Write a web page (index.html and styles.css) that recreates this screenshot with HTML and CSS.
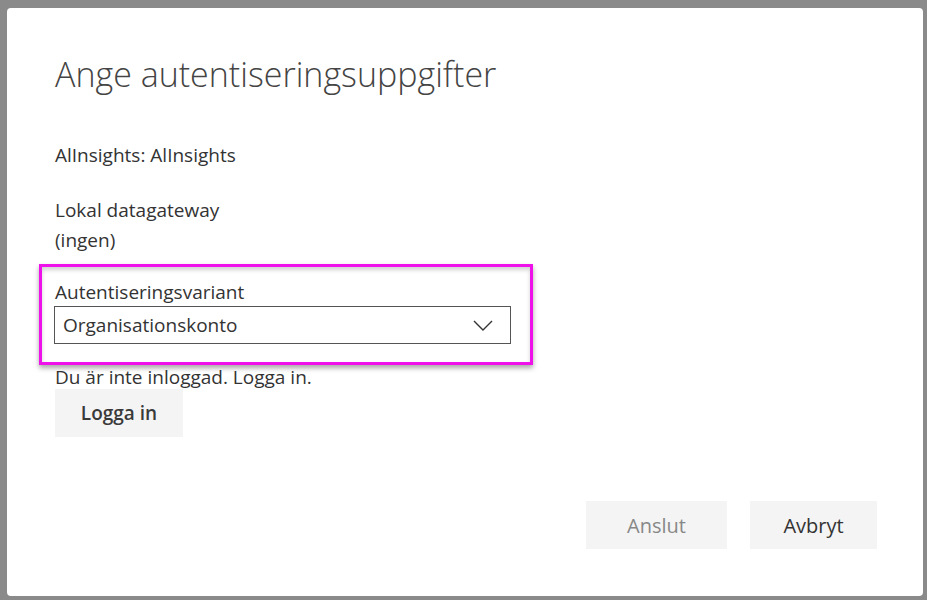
FILE: index.html
```html
<!DOCTYPE html>
<html lang="sv">
<head>
<meta charset="utf-8">
<title>Ange autentiseringsuppgifter</title>
<link rel="stylesheet" href="styles.css">
</head>
<body>
<div class="page">
  <div class="dialog">
    <h1 class="title">Ange autentiseringsuppgifter</h1>
    <p class="line first">AlInsights: AlInsights</p>
    <p class="line gateway">Lokal datagateway</p>
    <p class="line">(ingen)</p>
    <div class="highlight">
      <div class="label">Autentiseringsvariant</div>
      <div class="select">
        <span class="select-text">Organisationskonto</span>
        <svg class="chevron" width="20" height="11" viewBox="0 0 20 11"><polyline points="1,1 10,10 19,1" fill="none" stroke="#333" stroke-width="1.4"/></svg>
      </div>
    </div>
    <p class="status">Du är inte inloggad. Logga in.</p>
    <button class="btn signin">Logga in</button>
    <div class="footer">
      <button class="btn connect" disabled>Anslut</button>
      <button class="btn cancel">Avbryt</button>
    </div>
  </div>
</div>
</body>
</html>
```
FILE: styles.css
```css
html, body {
  margin: 0;
  padding: 0;
  background: #8a8a8a;
}
.page {
  padding: 8px 4px 4px 7px;
  height: 600px;
  box-sizing: border-box;
}
.dialog {
  width: 916px;
  height: 588px;
  box-sizing: border-box;
  background: #fff;
  border-radius: 4px;
  padding: 44px 46px 47px 48px;
  display: flex;
  flex-direction: column;
  align-items: flex-start;
  font-family: "Open Sans", "Noto Sans", sans-serif;
  color: #333;
}
.title {
  margin: 0;
  font-weight: 300;
  font-size: 34px;
  line-height: 44px;
  color: #444;
}
.line {
  margin: 0;
  font-size: 19px;
  line-height: 30px;
}
.first { margin-top: 44px; }
.gateway { margin-top: 25px; }
.highlight {
  margin-top: 9px;
  margin-left: -16px;
  width: 494px;
  box-sizing: border-box;
  border: 3px solid #ee11ea;
  padding: 13px 19px 18px 12px;
  box-shadow: 0 3px 5px rgba(0,0,0,0.35), inset 0 3px 4px rgba(0,0,0,0.18);
}
.label {
  font-size: 19px;
  line-height: 24px;
  margin-bottom: 2px;
  padding-left: 1px;
}
.select {
  height: 38px;
  box-sizing: border-box;
  border: 1px solid #555;
  display: flex;
  align-items: center;
  justify-content: space-between;
  padding: 0 17px 0 8px;
  font-size: 19px;
}
.chevron { display: block; }
.status {
  margin: 0;
  font-size: 19px;
  line-height: 24px;
}
.btn {
  font-family: "Open Sans", "Noto Sans", sans-serif;
  border: none;
  background: #f4f4f4;
  height: 48px;
  padding: 0;
  font-size: 20px;
  color: #333;
}
.signin {
  margin-top: 0;
  width: 128px;
  font-weight: 600;
  font-size: 19px;
  color: #3a3a3a;
}
.footer {
  margin-top: auto;
  align-self: flex-end;
  display: flex;
  gap: 23px;
}
.connect {
  width: 141px;
  color: #888;
}
.cancel {
  width: 127px;
}
```
